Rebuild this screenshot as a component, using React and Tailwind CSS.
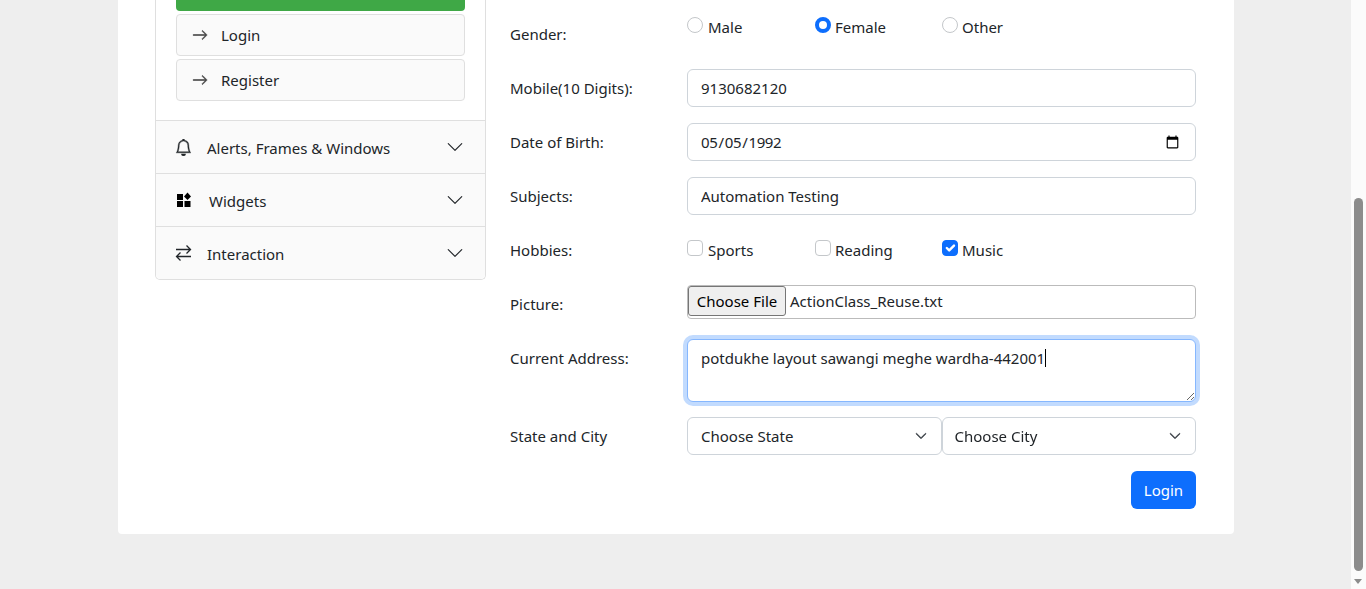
import React, { useEffect, useRef } from 'react';
import { BsArrowRight, BsBell, BsChevronDown } from 'react-icons/bs';

const fieldClass = 'h-[38px] w-full rounded-[6px] border border-[#ced4da] bg-white px-[13px] text-[#212529] outline-none';

function WidgetIcon() {
  return (
    <svg width="16" height="16" viewBox="0 0 16 16" fill="black">
      <rect x="1" y="2" width="6" height="6" />
      <rect x="1" y="9" width="6" height="6" />
      <rect x="8.5" y="9" width="6" height="6" />
      <path d="M11.5 0.5 L15 4.5 L11.5 8 L8 4.5 Z" />
    </svg>
  );
}

function SwapIcon() {
  return (
    <svg width="17" height="18" viewBox="0 0 17 18" fill="none" stroke="#212529" strokeWidth="1.3">
      <path d="M1 5.5H15.5M11.5 1.5L15.5 5.5L11.5 9.5" />
      <path d="M16 12.5H1.5M5.5 8.5L1.5 12.5L5.5 16.5" />
    </svg>
  );
}

function NavLink({ label, mt }) {
  return (
    <div className={`flex h-[42px] items-center rounded-[4px] border border-[#dfdfdf] bg-[#fafafa] pl-[15px] text-[#212529] ${mt}`}>
      <BsArrowRight size={16} strokeWidth={0.6} className="text-[#444]" />
      <span className="ml-[13px]">{label}</span>
    </div>
  );
}

function AccordionRow({ icon, label, gap, last }) {
  return (
    <div className={`flex h-[53px] items-center border-t border-[#dfdfdf] bg-[#fafafa] pl-[19px] pr-[21px] text-[#212529] ${last ? 'rounded-b-[5px]' : ''}`}>
      {icon}
      <span className={`pt-[2px] ${gap}`}>{label}</span>
      <BsChevronDown size={18} className="ml-auto text-[#212529]" />
    </div>
  );
}

function Row({ label, children, mb = 'mb-[16px]' }) {
  return (
    <div className={`flex ${mb}`}>
      <div className="w-[177px] shrink-0 py-[7px] leading-[24px]">{label}</div>
      <div className="min-w-0 flex-1">{children}</div>
    </div>
  );
}

function Radio({ label, checked, gap }) {
  return (
    <label className="flex h-[24px] items-center">
      <input
        type="radio"
        name="gender"
        defaultChecked={checked}
        className="mb-[4px] h-[16px] w-[16px] appearance-none rounded-full border border-[#c4c7ca] bg-white checked:border-[4px] checked:border-[#0d6efd]"
      />
      <span className={gap}>{label}</span>
    </label>
  );
}

function Check({ label, checked, gap }) {
  return (
    <label className="flex h-[24px] items-center">
      <span className="relative mb-[4px] h-[16px] w-[16px]">
        <input
          type="checkbox"
          defaultChecked={checked}
          className="block h-[16px] w-[16px] appearance-none rounded-[4px] border border-[#c4c7ca] bg-white checked:border-[#0d6efd] checked:bg-[#0d6efd]"
        />
        {checked && (
          <svg className="absolute left-0 top-0" width="16" height="16" viewBox="0 0 20 20" fill="none">
            <path d="m6 10 3 3 6-6" stroke="white" strokeWidth="3" strokeLinecap="round" strokeLinejoin="round" />
          </svg>
        )}
      </span>
      <span className={gap}>{label}</span>
    </label>
  );
}

function Select({ label, className = '' }) {
  return (
    <div className="relative">
      <select className={`${fieldClass} appearance-none ${className}`}>
        <option>{label}</option>
      </select>
      <BsChevronDown size={12} strokeWidth={1} className="pointer-events-none absolute right-[15px] top-[13px] text-[#343a40]" />
    </div>
  );
}

export default function App() {
  const addressRef = useRef(null);

  useEffect(() => {
    const el = addressRef.current;
    el.focus();
    el.setSelectionRange(el.value.length, el.value.length);
  }, []);

  return (
    <div className="flex h-screen overflow-hidden bg-[#eeeeee] font-['Noto_Sans','Open_Sans',sans-serif] text-[15px] text-[#212529]">
      <main className="min-w-0 flex-1">
        <div className="ml-[118px] flex h-[534px] w-[1116px] rounded-b-[4px] bg-white">
          {/* left menu */}
          <div className="ml-[37px] flex w-[331px] shrink-0 flex-col self-start rounded-b-[5px] border-x border-b border-[#dfdfdf]">
            <div className="h-[120px] bg-white px-[20px]">
              <div className="h-[11px] rounded-b-[4px] bg-[#3fa846]" />
              <NavLink label="Login" mt="mt-[3px]" />
              <NavLink label="Register" mt="mt-[3px]" />
            </div>
            <AccordionRow icon={<BsBell size={17} strokeWidth={0.4} />} label="Alerts, Frames & Windows" gap="ml-[15px]" />
            <AccordionRow icon={<span className="ml-[1px]"><WidgetIcon /></span>} label="Widgets" gap="ml-[17px]" />
            <AccordionRow icon={<SwapIcon />} label="Interaction" gap="ml-[15px]" last />
          </div>

          {/* form */}
          <form className="ml-[24px] w-[686px] shrink-0 pt-[15px]">
            <Row label="Gender:">
              <div className="grid grid-cols-[128px_127px_1fr]">
                <Radio label="Male" gap="ml-[5px]" />
                <Radio label="Female" checked gap="ml-[4px]" />
                <Radio label="Other" gap="ml-[4px]" />
              </div>
            </Row>
            <Row label="Mobile(10 Digits):">
              <input type="text" defaultValue="9130682120" className={fieldClass} />
            </Row>
            <Row label="Date of Birth:">
              <input type="date" defaultValue="1992-05-05" className={`${fieldClass} pl-[12px] tracking-[-0.35px]`} />
            </Row>
            <Row label="Subjects:">
              <input type="text" defaultValue="Automation Testing" className={fieldClass} />
            </Row>
            <Row label="Hobbies:">
              <div className="grid grid-cols-[128px_127px_1fr] pt-[7px]">
                <Check label="Sports" gap="ml-[5px]" />
                <Check label="Reading" gap="ml-[4px]" />
                <Check label="Music" checked gap="ml-[4px]" />
              </div>
            </Row>
            <Row label="Picture:">
              <div className="flex h-[34px] items-center rounded-[4px] border border-[#bbbbbb] pb-[2px]">
                <button type="button" className="h-[30px] w-[98px] rounded-[3px] border border-[#767676] bg-[#efefef] text-black">
                  Choose File
                </button>
                <span className="ml-[4px]">ActionClass_Reuse.txt</span>
              </div>
            </Row>
            <Row label="Current Address:" mb="mb-[15px]">
              <div className="relative">
                <textarea
                  ref={addressRef}
                  defaultValue="potdukhe layout sawangi meghe wardha-442001"
                  className="block h-[63px] w-full rounded-[6px] border border-[#86b7fe] bg-white px-[13px] py-[6px] leading-[24px] text-[#212529] caret-transparent shadow-[0_0_0_4px_rgba(13,110,253,0.25)] outline-none"
                />
                <span className="absolute left-[358px] top-[10px] h-[18px] w-[1px] bg-black" />
              </div>
            </Row>
            <Row label="State and City">
              <div className="grid grid-cols-2">
                <Select label="Choose State" />
                <Select label="Choose City" className="pl-[12px]" />
              </div>
            </Row>
            <div className="flex justify-end">
              <button type="button" className="h-[38px] w-[65px] rounded-[6px] bg-[#0d6efd] text-white">
                Login
              </button>
            </div>
          </form>
        </div>
      </main>

      {/* page scrollbar as it stood in the capture */}
      <aside className="relative w-[15px] shrink-0 bg-[#fbfbfb]">
        <div className="absolute left-[3px] top-[198px] h-[373px] w-[9px] rounded-[5px] bg-[#8c8c8c]" />
        <div className="absolute bottom-[5px] left-[3px] h-0 w-0 border-x-[4.5px] border-t-[5px] border-x-transparent border-t-[#8c8c8c]" />
      </aside>
    </div>
  );
}
